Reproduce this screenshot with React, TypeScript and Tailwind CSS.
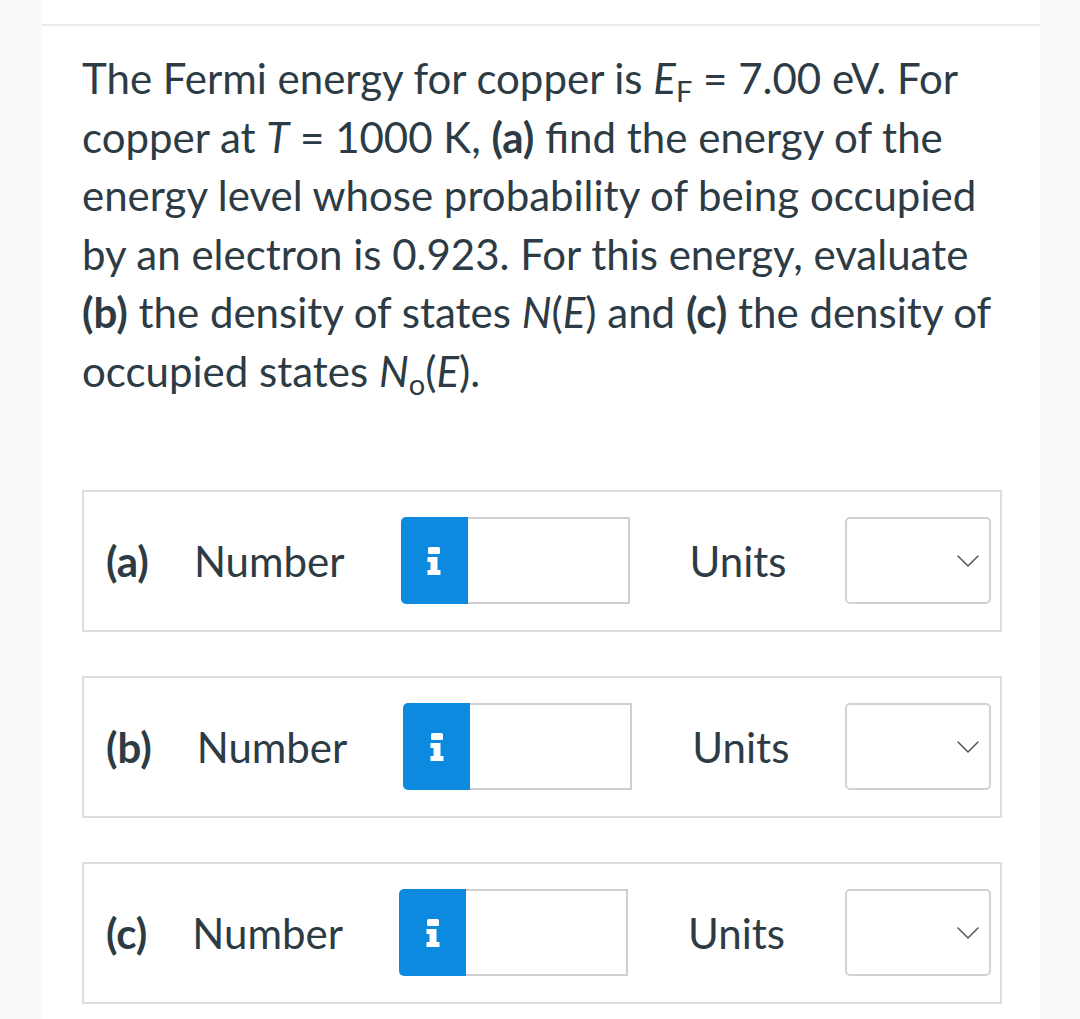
import { ChevronDown } from 'lucide-react'

function InfoIcon() {
  return (
    <svg width="16" height="28" viewBox="0 0 16 28" fill="#fff">
      <rect x="2" y="0" width="12" height="7" rx="1.5" />
      <path d="M1.5 10 H11.5 V23 H14.5 V28 H1.5 V23 H4.5 V15 H1.5 Z" />
    </svg>
  )
}

function AnswerRow({ label }: { label: string }) {
  return (
    <div className="flex items-center border-2 border-[#dcdcdc] h-[142px] pl-[22px] pr-[9px]">
      <span className="font-bold text-[42px] leading-none">{label}</span>
      <span className="ml-[45px] text-[42px] leading-none">Number</span>
      <div className="ml-[56px] flex h-[87px]">
        <div className="w-[67px] bg-[#0b8ae0] rounded-l-[5px] flex items-center justify-center">
          <InfoIcon />
        </div>
        <div className="w-[162px] border-2 border-l-0 border-[#cfcfcf] bg-white" />
      </div>
      <span className="ml-[60px] text-[42px] leading-none">Units</span>
      <div className="ml-auto w-[146px] h-[87px] border-2 border-[#d2d2d2] rounded-[5px] flex items-center justify-end pr-[1px]">
        <ChevronDown size={40} strokeWidth={0.9} color="#555" />
      </div>
    </div>
  )
}

export default function App() {
  return (
    <div className="min-h-[1019px] bg-[#fafafa] font-['Lato','Noto_Sans',sans-serif] text-[#2d3b45]">
      <div className="mx-[42px] w-[998px] min-h-[1019px] bg-white">
        <div className="h-[24px]" />
        <div className="h-[2px] bg-[#ebebeb]" />
        <div className="pl-[40px] pr-[40px]">
          <p className="mt-[23px] text-[42px] leading-[58.6px]">
            The Fermi energy for copper is <i>E</i>
            <span className="text-[29px] align-[-0.28em] leading-none">F</span> = 7.00 eV. For
            <br />
            copper at <i>T</i> = 1000 K, <b>(a)</b> find the energy of the
            <br />
            energy level whose probability of being occupied
            <br />
            by an electron is 0.923. For this energy, evaluate
            <br />
            <b>(b)</b> the density of states <i>N</i>(<i>E</i>) and <b>(c)</b> the density of
            <br />
            occupied states <i>N</i>
            <span className="text-[29px] align-[-0.28em] leading-none">o</span>(<i>E</i>).
          </p>
          <div className="mt-[89px] mr-[-2px] flex flex-col gap-[44px]">
            <AnswerRow label="(a)" />
            <AnswerRow label="(b)" />
            <AnswerRow label="(c)" />
          </div>
        </div>
      </div>
    </div>
  )
}
